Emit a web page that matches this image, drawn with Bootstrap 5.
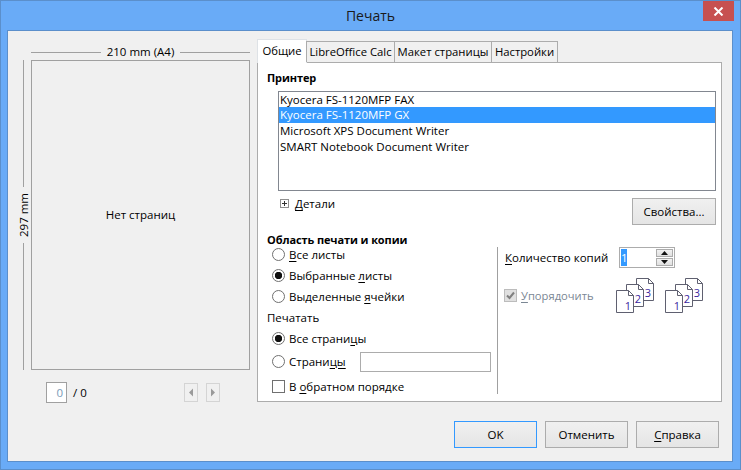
<!DOCTYPE html>
<html lang="ru"><head><meta charset="utf-8"><title>Печать</title>
<link href="https://cdn.jsdelivr.net/npm/bootstrap@5.3.0/dist/css/bootstrap.min.css" rel="stylesheet">
<style>
html,body{margin:0;width:741px;height:470px;overflow:hidden;background:#69abf7}
body{font-family:"Open Sans","Noto Sans","Liberation Sans",sans-serif;font-size:11.5px;color:#000;line-height:16px}
.dlg{width:741px;height:470px;border:1px solid #5b8fcb;background:#69abf7;display:flex;flex-direction:column;padding:0 7px 7px 6px}
.ttl{height:29px;flex:none;margin:0 -7px 0 -6px;display:flex;justify-content:center;align-items:center;font-size:14px;color:#1a1a1a;position:relative}
.xbtn{position:absolute;top:0;right:6px;width:31px;height:20px;background:#c75050;display:flex;align-items:center;justify-content:center}
.client{flex:1;background:#f0f0f0;border:1px solid #5b8fcb;display:flex;flex-direction:column;min-height:0}
.mainr{display:flex;height:371px;flex:none}
.prev{width:249px;flex:none;padding:13px 0 0 11px}
.rul-h{height:16px;margin-left:12px;width:219px;display:flex;align-items:center;gap:6px}
.rul-h i,.rul-v i{flex:1;background:#a0a0a0;display:block}
.rul-h i{height:1px}
.rul-v i{width:1px}
.prow{display:flex;height:310px}
.rul-v{width:9px;flex:none;display:flex;flex-direction:column;align-items:center;gap:6px}
.rul-v span{writing-mode:vertical-rl;transform:rotate(180deg);line-height:9px;white-space:nowrap;width:9px;display:flex;justify-content:center}
.rv-wrap{width:12px;flex:none;display:flex}
.pg{width:219px;height:310px;border:1px solid #a0a0a0;display:flex;align-items:center;justify-content:center}
.pager{display:flex;align-items:center;margin:12px 0 0 27px;height:21px}
.pgin{width:21px;height:21px;border:1px solid #a0a0a0;background:#fff;color:#7a9ab8;text-align:right;padding:2px 3px 0 0}
.pgt{margin-left:6px;width:111px}
.arr{width:14px;height:19px;border:1px solid #d4d4d4;display:flex;align-items:center;justify-content:center;margin-right:8px}
.tabs{width:465px;flex:none;padding-top:8px}
.nav-tabs.tbs{border:0;height:23px;--bs-nav-tabs-border-width:0;flex-wrap:nowrap;margin:0;position:relative;z-index:1}
.tbs .nav-link{height:21px;margin-top:2px;background:#f0f0f0;border:1px solid #acacac;border-bottom:0;border-radius:0;padding:1px 0 0;color:#000;text-align:center;margin-bottom:0;font-size:11.3px;line-height:17px;white-space:nowrap}
.tbs .nav-link.active{height:24px;margin-top:0;background:#fff;color:#000;padding-top:2px}
.t1{width:50px}.t2{width:89px;margin-left:-1px}.t3{width:98px;margin-left:-1px}.t4{width:67px;margin-left:-1px}
.pnl{height:340px;background:#fff;border:1px solid #acacac;padding:7px 5px 0 9px}
.hb{font-weight:700;line-height:16px;font-size:11px;letter-spacing:-.1px}
.lst.list-group{margin:5px 0 0 11px;width:438px;height:100px;border:1px solid #828790;border-radius:0;display:block}
.lst .list-group-item{border:0;border-radius:0;padding:0 0 0 1px;height:16px;line-height:16px;background:transparent;color:#000;font-size:11.5px}
.lst .list-group-item.active{background:#3399ff;color:#fff}
.drow{display:flex;align-items:flex-start;margin:7px 0 0 13px;height:27px;justify-content:space-between;width:436px}
.plus{width:9px;height:9px;border:1px solid #8f8f8f;flex:none;margin-top:3px;position:relative;margin-right:6px}
.plus:before{content:"";position:absolute;left:1px;right:1px;top:3px;height:1px;background:#333}
.plus:after{content:"";position:absolute;top:1px;bottom:1px;left:3px;width:1px;background:#333}
.btn.wb{font-size:11.5px;height:27px;padding:0;border:1px solid #acacac;border-radius:0;background:linear-gradient(#f0f0f0,#e5e5e5);color:#000;line-height:25px;width:83px}
.btn.wb.pr{width:84px}
.btn.wb.def{border:1px solid #3399ff}
.dt{display:flex;margin-top:-2px}
.low{display:flex;margin-top:7px;height:160px}
.lc{width:230px;flex:none;padding-right:6px}
.rc{border-left:1px solid #a0a0a0;margin-top:15px;height:147px;padding-left:7px;width:210px}
.ck{display:flex;align-items:center;margin:0;padding:0 0 0 5px;min-height:0;height:21px;gap:4px}
.ck.c0{margin-top:-4px}
.ck.c1{margin-top:2px}
.ck.c2{height:25px}
.ck.c3{margin-top:2px}
.pch{margin-top:3px}
.form-check-input.rd{margin:0;width:13px;height:13px;float:none;border:1px solid #707070;background-color:#fff;flex:none;box-shadow:none}
.form-check-input.rd:checked{background-color:#fff;background-image:radial-gradient(circle at 50% 50%,#111 3.4px,#fff 4px);border-color:#707070}
.form-check-input[type=checkbox].cb{border-radius:0;margin:0;width:13px;height:13px;float:none;border:1px solid #707070;background-color:#fff;flex:none;box-shadow:none}
.form-check-input[type=checkbox].cb:disabled{opacity:1;background-color:#e0e0e0;border-color:#bcbcbc;background-size:11px;background-image:url("data:image/svg+xml,%3csvg xmlns='http://www.w3.org/2000/svg' viewBox='0 0 11 11'%3e%3cpath fill='none' stroke='%23808080' stroke-width='2' d='M2 5.5l2.5 2.5 4.5-5.5'/%3e%3c/svg%3e")}
.form-check-input.cb:disabled~label{opacity:1}
.ul-k{text-decoration:underline;text-underline-offset:2px}
.inp{width:131px;height:20px;border:1px solid #acacac;margin-left:auto;background:#fff;display:block}
.cnt{width:114px;flex:none}
.spn{width:56px;height:21px;border:1px solid #acacac;background:#fff;display:flex;justify-content:space-between;padding:1px}
.sel{background:#3399ff;color:#fff;line-height:17px;height:17px;width:6px;overflow:hidden;text-align:center;display:block}
.sb{width:17px;display:flex;flex-direction:column;gap:1px}
.sb b{flex:1;background:linear-gradient(#f2f2f2,#e0e0e0);border:1px solid #acacac;display:flex;align-items:center;justify-content:center}
.cr{margin-top:10px}
.muted{color:#7b8794;width:112px;flex:none;padding-left:0;margin-left:-1px;font-size:11.2px}
.ic2{margin-left:11px}
.foot{display:flex;justify-content:flex-end;gap:8px;padding:19px 13px 0 0}
</style></head><body>
<div class="dlg">
 <div class="ttl">Печать
  <div class="xbtn"><svg width="11" height="9" viewBox="0 0 11 9"><path d="M1.5 0.5 L9.5 8.5 M9.5 0.5 L1.5 8.5" stroke="#fff" stroke-width="2" fill="none"/></svg></div>
 </div>
 <div class="client">
  <div class="mainr">
   <div class="prev">
    <div class="rul-h"><i></i><span>210 mm (A4)</span><i></i></div>
    <div class="prow">
     <div class="rv-wrap"><div class="rul-v"><i></i><span>297 mm</span><i></i></div></div>
     <div class="pg">Нет страниц</div>
    </div>
    <div class="pager">
     <div class="pgin">0</div><div class="pgt">/ 0</div>
     <div class="arr"><svg width="6" height="9" viewBox="0 0 6 9"><path d="M5 0.5V8.5L1 4.5Z" fill="#9a9a9a"/></svg></div>
     <div class="arr"><svg width="6" height="9" viewBox="0 0 6 9"><path d="M1 0.5V8.5L5 4.5Z" fill="#9a9a9a"/></svg></div>
    </div>
   </div>
   <div class="tabs">
    <ul class="nav nav-tabs tbs">
     <li class="nav-item"><a class="nav-link active t1">Общие</a></li>
     <li class="nav-item"><a class="nav-link t2">LibreOffice Calc</a></li>
     <li class="nav-item"><a class="nav-link t3">Макет страницы</a></li>
     <li class="nav-item"><a class="nav-link t4">Настройки</a></li>
    </ul>
    <div class="pnl">
     <div class="hb">Принтер</div>
     <div class="list-group lst">
      <div class="list-group-item">Kyocera FS-1120MFP FAX</div>
      <div class="list-group-item active">Kyocera FS-1120MFP GX</div>
      <div class="list-group-item">Microsoft XPS Document Writer</div>
      <div class="list-group-item">SMART Notebook Document Writer</div>
     </div>
     <div class="drow">
      <div class="dt"><span class="plus"></span><span><span class="ul-k">Д</span>етали</span></div>
      <button class="btn wb pr" type="button">Свойства...</button>
     </div>
     <div class="low">
      <div class="lc">
       <div class="hb">Область печати и копии</div>
       <div class="form-check ck c0"><input class="form-check-input rd" type="radio" name="a"><label><span class="ul-k">В</span>се листы</label></div>
       <div class="form-check ck"><input class="form-check-input rd" type="radio" name="a" checked><label>Выбранные <span class="ul-k">л</span>исты</label></div>
       <div class="form-check ck"><input class="form-check-input rd" type="radio" name="a"><label>Выделенные <span class="ul-k">я</span>чейки</label></div>
       <div class="pch">Печатать</div>
       <div class="form-check ck c1"><input class="form-check-input rd" type="radio" name="b" checked><label>Все страни<span class="ul-k">ц</span>ы</label></div>
       <div class="form-check ck c2"><input class="form-check-input rd" type="radio" name="b"><label>Страни<span class="ul-k">цы</span></label><span class="inp"></span></div>
       <div class="form-check ck c3"><input class="form-check-input cb" type="checkbox"><label>В <span class="ul-k">о</span>братном порядке</label></div>
      </div>
      <div class="rc">
       <div class="d-flex align-items-center"><span class="cnt"><span class="ul-k">К</span>оличество копий</span>
        <div class="spn"><span class="sel">1</span><div class="sb"><b><svg width="7" height="4" viewBox="0 0 7 4"><path d="M3.5 0L7 4H0Z" fill="#111"/></svg></b><b><svg width="7" height="4" viewBox="0 0 7 4"><path d="M3.5 4L7 0H0Z" fill="#111"/></svg></b></div></div>
       </div>
       <div class="d-flex align-items-center cr">
        <div class="ck muted"><input class="form-check-input cb" type="checkbox" checked disabled><label><span class="ul-k">У</span>порядочить</label></div>
        <svg width="38" height="35" viewBox="0 0 38 35"><g fill="#fff" stroke="#5f6070"><path d="M20.5 .5H32.5L37.5 5.5V22.5H20.5Z"/><path d="M10.5 6.5H22.5L27.5 11.5V28.5H10.5Z"/><path d="M.5 12.5H12.5L17.5 17.5V34.5H.5Z"/></g><g fill="none" stroke="#5f6070"><path d="M32.5 .5V5.5H37.5M22.5 6.5V11.5H27.5M12.5 12.5V17.5H17.5"/></g><g fill="#3a1f9e" font-size="11" font-family="Open Sans" text-anchor="middle"><text x="32" y="19">3</text><text x="22" y="25">2</text><text x="12" y="32">1</text></g></svg>
        <svg class="ic2" width="38" height="35" viewBox="0 0 38 35"><g fill="#fff" stroke="#5f6070"><path d="M20.5 .5H32.5L37.5 5.5V22.5H20.5Z"/><path d="M10.5 6.5H22.5L27.5 11.5V28.5H10.5Z"/><path d="M.5 12.5H12.5L17.5 17.5V34.5H.5Z"/></g><g fill="none" stroke="#5f6070"><path d="M32.5 .5V5.5H37.5M22.5 6.5V11.5H27.5M12.5 12.5V17.5H17.5"/></g><g fill="#3a1f9e" font-size="11" font-family="Open Sans" text-anchor="middle"><text x="32" y="19">3</text><text x="22" y="25">2</text><text x="12" y="32">1</text></g></svg>
       </div>
      </div>
     </div>
    </div>
   </div>
  </div>
  <div class="foot">
   <button class="btn wb def" type="button">OK</button>
   <button class="btn wb" type="button">Отменить</button>
   <button class="btn wb" type="button"><span class="ul-k">С</span>правка</button>
  </div>
 </div>
</div>
</body></html>
